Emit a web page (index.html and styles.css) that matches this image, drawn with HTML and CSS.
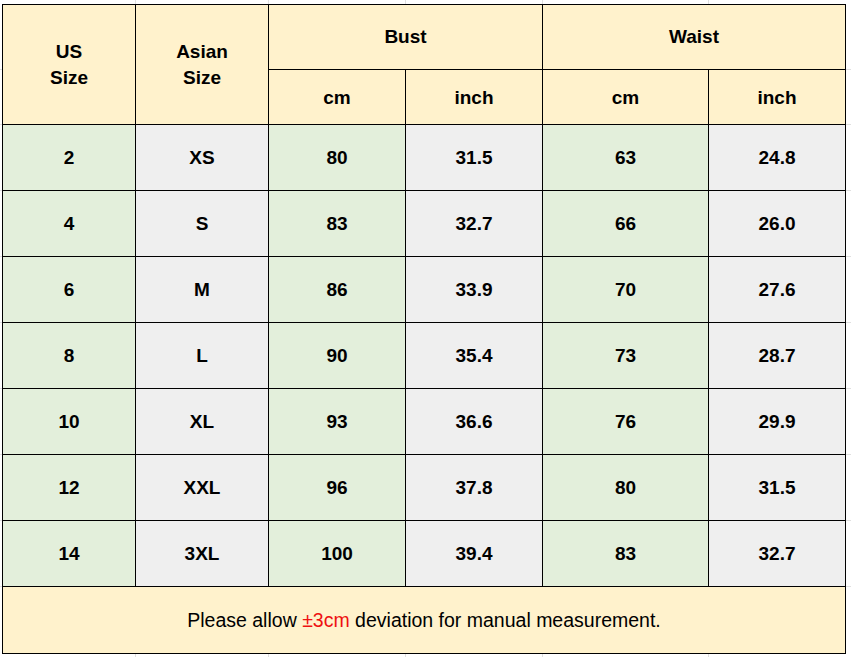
FILE: index.html
```html
<!DOCTYPE html>
<html>
<head>
<meta charset="utf-8">
<link rel="stylesheet" href="styles.css">
</head>
<body>
<table class="chart">
  <colgroup>
    <col class="c1"><col class="c2"><col class="c3"><col class="c4"><col class="c5"><col class="c6">
  </colgroup>
  <thead>
    <tr class="h1">
      <th rowspan="2">US<br>Size</th>
      <th rowspan="2">Asian<br>Size</th>
      <th colspan="2" class="grp">Bust</th>
      <th colspan="2" class="grp">Waist</th>
    </tr>
    <tr class="h2">
      <th>cm</th><th>inch</th><th>cm</th><th>inch</th>
    </tr>
  </thead>
  <tbody>
    <tr><td class="g">2</td><td class="s">XS</td><td class="g">80</td><td class="s">31.5</td><td class="g">63</td><td class="s">24.8</td></tr>
    <tr><td class="g">4</td><td class="s">S</td><td class="g">83</td><td class="s">32.7</td><td class="g">66</td><td class="s">26.0</td></tr>
    <tr><td class="g">6</td><td class="s">M</td><td class="g">86</td><td class="s">33.9</td><td class="g">70</td><td class="s">27.6</td></tr>
    <tr><td class="g">8</td><td class="s">L</td><td class="g">90</td><td class="s">35.4</td><td class="g">73</td><td class="s">28.7</td></tr>
    <tr><td class="g">10</td><td class="s">XL</td><td class="g">93</td><td class="s">36.6</td><td class="g">76</td><td class="s">29.9</td></tr>
    <tr><td class="g">12</td><td class="s">XXL</td><td class="g">96</td><td class="s">37.8</td><td class="g">80</td><td class="s">31.5</td></tr>
    <tr><td class="g">14</td><td class="s">3XL</td><td class="g">100</td><td class="s">39.4</td><td class="g">83</td><td class="s">32.7</td></tr>
  </tbody>
  <tfoot>
    <tr><td colspan="6" class="note">Please allow <span class="red">±3cm</span> deviation for manual measurement.</td></tr>
  </tfoot>
</table>
</body>
</html>
```
FILE: styles.css
```css
html {
  margin: 0;
  padding: 0;
  min-height: 100%;
  background-color: #ffffff;
  background-image:
    linear-gradient(#e0e0e0, #e0e0e0),
    linear-gradient(#e0e0e0, #e0e0e0),
    linear-gradient(#e0e0e0, #e0e0e0),
    linear-gradient(#e0e0e0, #e0e0e0),
    linear-gradient(#e0e0e0, #e0e0e0),
    linear-gradient(#e0e0e0, #e0e0e0),
    linear-gradient(#e0e0e0, #e0e0e0),
    linear-gradient(#e0e0e0, #e0e0e0),
    linear-gradient(#e0e0e0, #e0e0e0),
    linear-gradient(#e0e0e0, #e0e0e0),
    linear-gradient(#e0e0e0, #e0e0e0),
    linear-gradient(#e0e0e0, #e0e0e0),
    linear-gradient(#e0e0e0, #e0e0e0),
    linear-gradient(#e0e0e0, #e0e0e0);
  background-repeat: no-repeat;
  background-size:
    1px 100%, 1px 100%, 1px 100%, 1px 100%, 1px 100%,
    100% 1px, 100% 1px, 100% 1px, 100% 1px, 100% 1px, 100% 1px, 100% 1px, 100% 1px, 100% 1px;
  background-position:
    135px 0, 268px 0, 405px 0, 542px 0, 708px 0,
    0 69px, 0 124px, 0 190px, 0 256px, 0 322px, 0 388px, 0 454px, 0 520px, 0 586px;
}
body {
  margin: 0;
  padding: 4px 0 0 2px;
  font-family: "Liberation Sans", Arial, sans-serif;
}
.chart {
  border-collapse: collapse;
  table-layout: fixed;
  width: 844px;
  color: #000;
}
.c1 { width: 133px; }
.c2 { width: 133px; }
.c3 { width: 137px; }
.c4 { width: 137px; }
.c5 { width: 166px; }
.c6 { width: 137px; }
.chart th, .chart td {
  border: 1px solid #000;
  text-align: center;
  vertical-align: middle;
  padding: 0;
}
.chart th {
  background: #fff2cc;
  font-weight: bold;
  font-size: 19px;
  line-height: 26px;
}
.h1 th { height: 64px; }
.h2 th { height: 52px; padding-top: 2px; }
.chart tbody td {
  height: 65px;
  font-size: 19px;
  font-weight: bold;
}
.g { background: #e3efdb; }
.s { background: #efefef; }
.note {
  background: #fff2cc;
  height: 66px;
  font-size: 19.5px;
  font-weight: normal;
}
.red { color: #ee1111; }
```
